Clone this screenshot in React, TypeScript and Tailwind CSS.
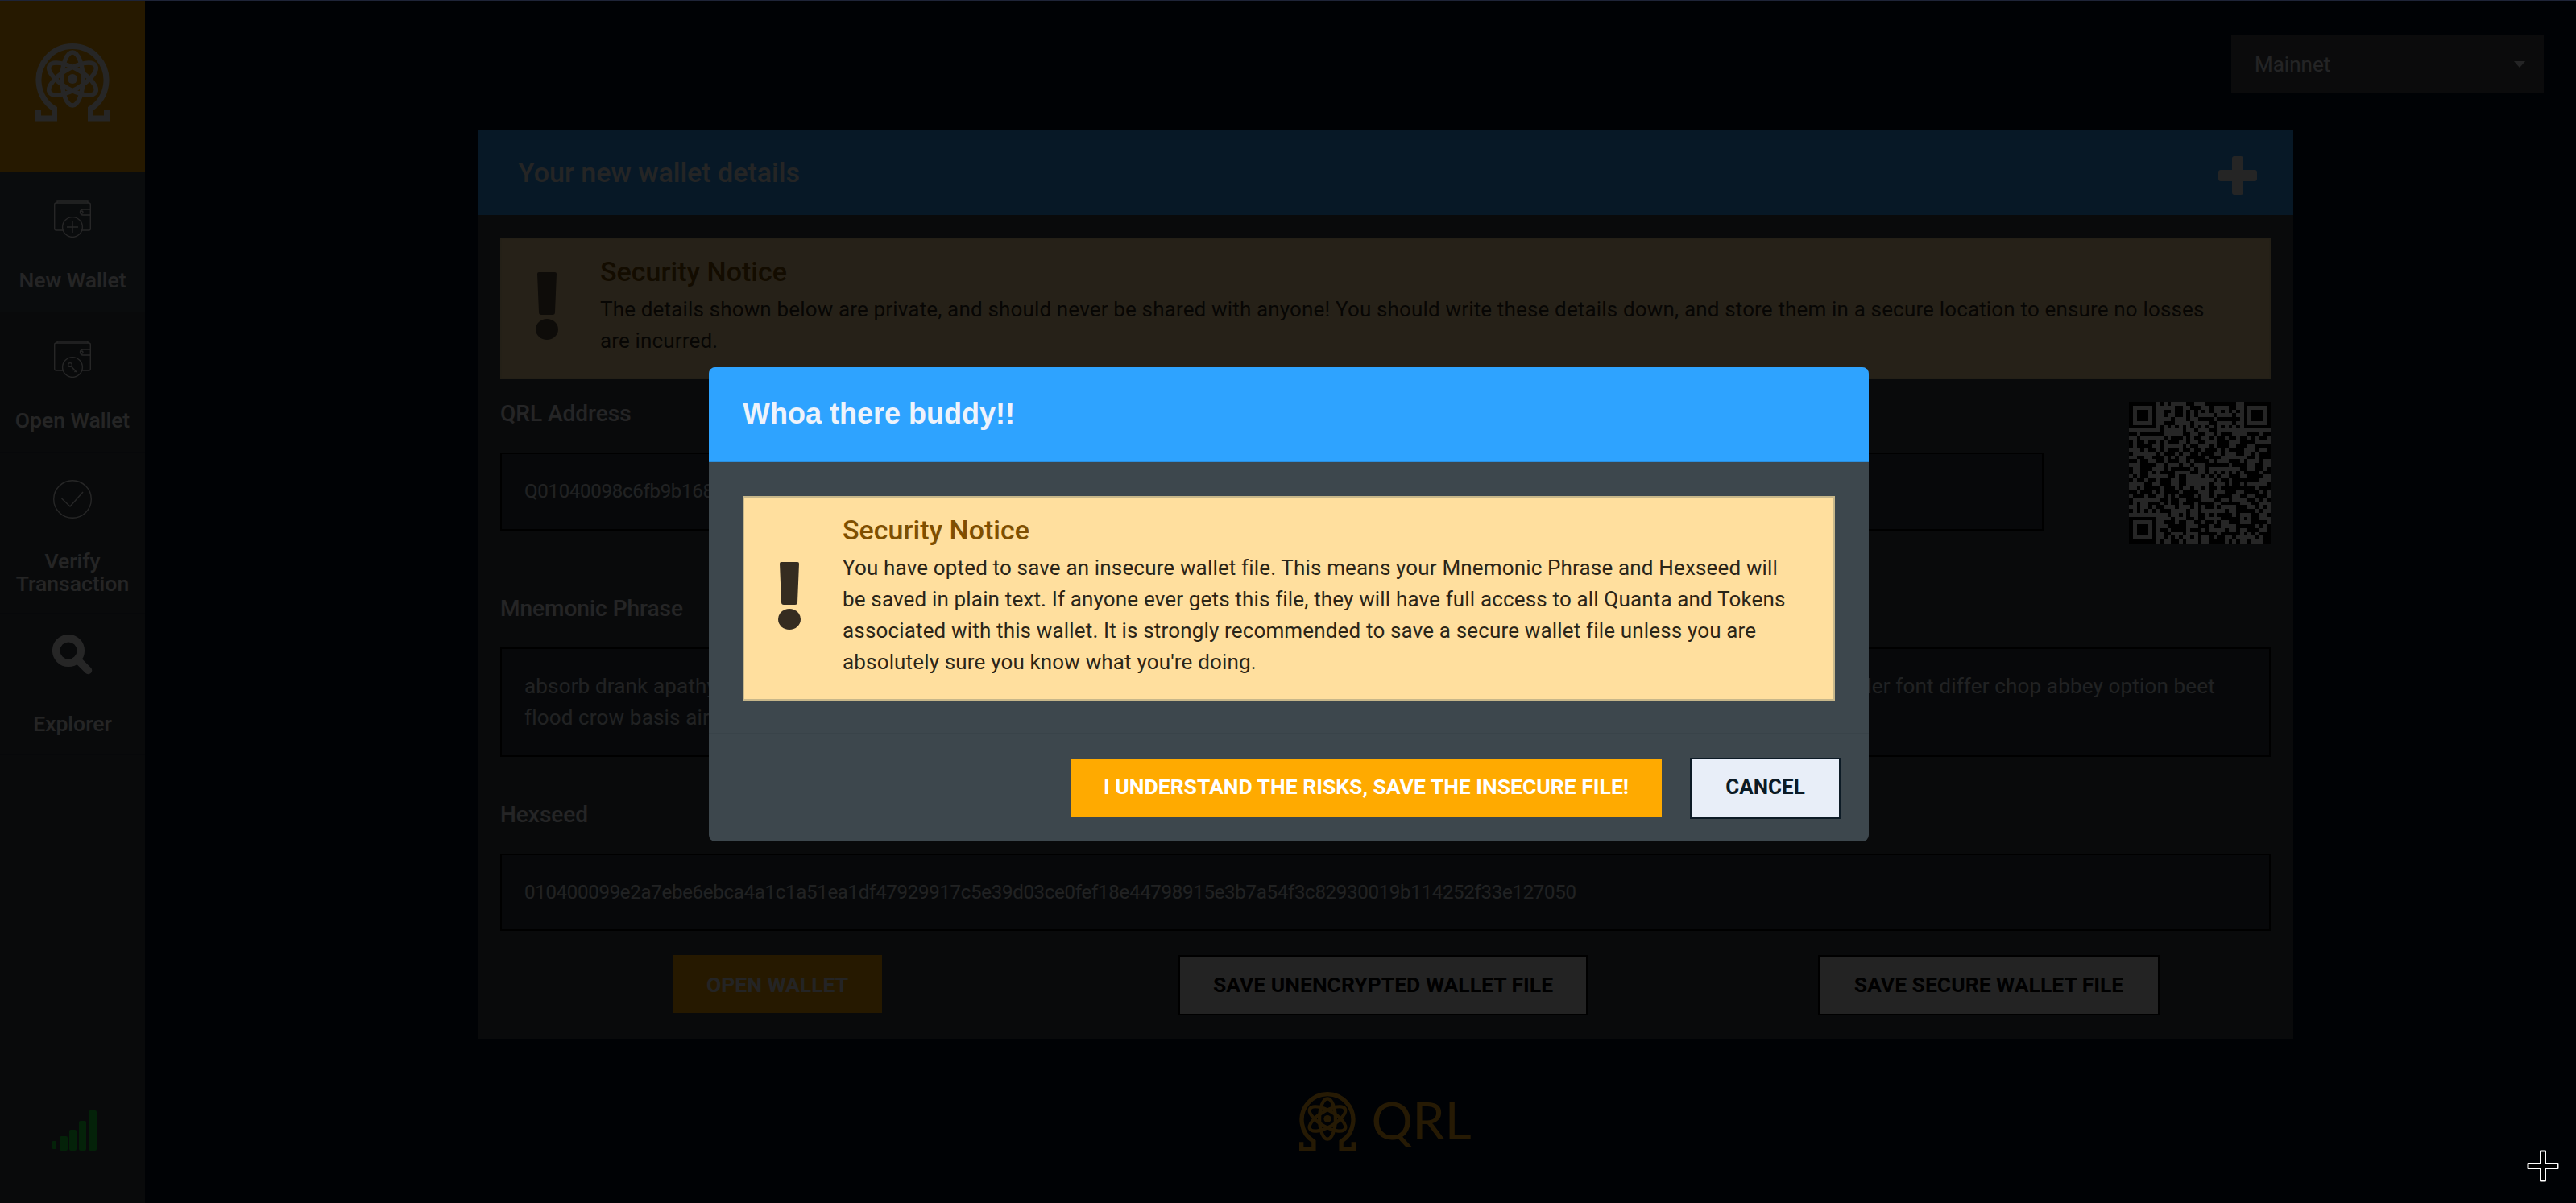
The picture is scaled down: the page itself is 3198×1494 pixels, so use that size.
import React from "react";

const qrSize = 37;

const inFinder = (x: number, y: number) => (x < 8 && y < 8) || (x > 28 && y < 8) || (x < 8 && y > 28);

// white modules of the QR, version 5 layout with a seeded fill
const qrModules = () => {
  const cells: [number, number][] = [];
  let seed = 48271;
  const next = () => {
    seed = (seed * 16807) % 2147483647;
    return seed / 2147483647;
  };
  for (let y = 0; y < qrSize; y++) {
    for (let x = 0; x < qrSize; x++) {
      const r = next();
      let white = r > 0.5;
      if (inFinder(x, y)) {
        const ox = x > 28 ? x - 30 : x;
        const oy = y > 28 ? y - 30 : y;
        const ring = ox === 7 || oy === 7 || ox === -1 || oy === -1;
        const outer = ox === 0 || ox === 6 || oy === 0 || oy === 6;
        const core = ox >= 2 && ox <= 4 && oy >= 2 && oy <= 4;
        white = ring || !(outer || core);
      } else if (x >= 28 && x <= 32 && y >= 28 && y <= 32) {
        const edge = x === 28 || x === 32 || y === 28 || y === 32;
        white = !(edge || (x === 30 && y === 30));
      } else if (x === 6) {
        white = y % 2 === 1;
      } else if (y === 6) {
        white = x % 2 === 1;
      }
      if (white) cells.push([x, y]);
    }
  }
  return cells;
};

const QrCode = () => (
  <svg width="176" height="176" viewBox="0 0 37 37" shapeRendering="crispEdges" className="shrink-0 bg-black">
    {qrModules().map(([x, y]) => (
      <rect key={`${x}-${y}`} x={x} y={y} width="1" height="1" fill="#ffffff" />
    ))}
  </svg>
);

const QrlLogo = ({ color, width, height }: { color: string; width: number; height: number }) => (
  <svg width={width} height={height} viewBox="0 0 92 98" fill="none" stroke={color} className="shrink-0">
    <path d="M3.5 83V94H23.5V82A42 42 0 1 1 68.5 82V94H88.5V83" strokeWidth="7" />
    <ellipse cx="46" cy="45" rx="33" ry="13" strokeWidth="5.5" transform="rotate(90 46 45)" />
    <ellipse cx="46" cy="45" rx="33" ry="13" strokeWidth="5.5" transform="rotate(30 46 45)" />
    <ellipse cx="46" cy="45" rx="33" ry="13" strokeWidth="5.5" transform="rotate(-30 46 45)" />
    <circle cx="46" cy="45" r="6" fill={color} stroke="none" />
  </svg>
);

const WalletBase = ({ fill, children }: { fill: string; children: React.ReactNode }) => (
  <svg width="46" height="46" viewBox="0 0 46 46" fill="none" stroke="#ffffff" strokeWidth="1.4" className="shrink-0">
    <path d="M4 3V1H42V3" />
    <rect x="0.7" y="3" width="44.6" height="34" rx="2" />
    <path d="M45.3 11H36a3.5 3.5 0 0 0 0 7H45.3" />
    <circle cx="34.5" cy="14.5" r="1.5" />
    <circle cx="23" cy="33" r="12.4" fill={fill} />
    {children}
  </svg>
);

const NewWalletIcon = () => (
  <WalletBase fill="#465059">
    <path d="M23 26V40M16 33H30" />
  </WalletBase>
);

const OpenWalletIcon = () => (
  <WalletBase fill="#3c444c">
    <circle cx="20" cy="30" r="2.4" />
    <path d="M21.5 32L28 39M25 35.5L23.5 37M27 37.5L25.5 39" />
  </WalletBase>
);

const VerifyIcon = () => (
  <svg width="48" height="48" viewBox="0 0 48 48" fill="none" stroke="#ffffff" strokeWidth="1.4" className="shrink-0">
    <circle cx="24" cy="24" r="23.3" />
    <path d="M10.5 23L21 33L37 15" />
  </svg>
);

const SearchIcon = () => (
  <svg width="50" height="50" viewBox="0 0 50 50" fill="none" stroke="#ffffff" strokeWidth="9.5" className="shrink-0">
    <circle cx="20" cy="20" r="15.3" />
    <path d="M31 31L44.5 44.5" strokeLinecap="round" />
  </svg>
);

const Bang = ({ color }: { color: string }) => (
  <svg width="28" height="84" viewBox="0 0 28 84" fill={color} className="shrink-0">
    <path d="M4 0H24a2 2 0 0 1 2 2L24 50a3 3 0 0 1-3 3H7a3 3 0 0 1-3-3L2 2a2 2 0 0 1 2-2Z" />
    <ellipse cx="14" cy="71" rx="14" ry="13" />
  </svg>
);

const Notice = ({
  bang,
  className,
  titleClass,
  children,
}: {
  bang: string;
  className: string;
  titleClass: string;
  children: React.ReactNode;
}) => (
  <div className={`flex items-center border-2 pl-[42px] pt-5 pb-[26px] ${className}`}>
    <Bang color={bang} />
    <div className="ml-[52px] min-w-0">
      <div className={`h-10 text-[34px] leading-10 font-medium ${titleClass}`}>Security Notice</div>
      <div className="mt-2 text-[26px] leading-[39px] tracking-[0.16px] whitespace-nowrap">{children}</div>
    </div>
  </div>
);

const NavItem = ({
  label,
  icon,
  className,
  labelClass,
}: {
  label: React.ReactNode;
  icon: React.ReactNode;
  className: string;
  labelClass: string;
}) => (
  <div className={`flex flex-col items-center border-b border-[#333a42] text-center ${className}`}>
    {icon}
    <div className={`text-[26.5px] leading-7 font-medium text-[#f4f6f8] ${labelClass}`}>{label}</div>
  </div>
);

const Field = ({ label, className, children }: { label: string; className: string; children: React.ReactNode }) => (
  <div>
    <div className="text-[28px] leading-7 font-medium text-[#f4f6fa]">{label}</div>
    <div className={`mt-[34px] border-2 border-black bg-[#333b42] pl-7 leading-[39px] text-[#dfe3e8] ${className}`}>
      {children}
    </div>
  </div>
);

const SignalBars = () => (
  <svg width="56" height="50" viewBox="0 0 56 50" fill="#1be040" className="shrink-0">
    <rect x="0" y="38" width="5" height="10" rx="1" />
    <rect x="9" y="32" width="10" height="18" rx="2" />
    <rect x="21" y="24" width="9" height="26" rx="2" />
    <rect x="33" y="13" width="9" height="37" rx="2" />
    <rect x="45" y="0" width="10" height="50" rx="2" />
  </svg>
);

const CursorCross = () => (
  <svg width="40" height="40" viewBox="0 0 40 40" className="absolute left-[3137px] top-[1428px]">
    <path
      d="M17 1.5H23V17H38.5V23H23V38.5H17V23H1.5V17H17Z"
      fill="#000000"
      stroke="#ffffff"
      strokeWidth="2"
      strokeLinejoin="round"
    />
  </svg>
);

const saveButton =
  "flex h-[75px] items-center justify-center border-2 border-black bg-[#e8e9ec] pb-0.5 text-[26.5px] font-bold text-black";

export default function App() {
  return (
    <div className="relative flex h-[1494px] w-[3198px] flex-col overflow-hidden bg-[#000e22] [font-family:Roboto,sans-serif]">
      <div className="relative z-20 h-px shrink-0 bg-[#1e2438]" />
      <div className="flex min-h-0 flex-1">
        <aside className="flex w-[180px] shrink-0 flex-col bg-[#3c444c]">
          <div className="flex h-[213px] items-start justify-center bg-[#ffaa00] pt-[52px]">
            <QrlLogo color="#ffffff" width={92} height={98} />
          </div>
          <NavItem
            label="New Wallet"
            icon={<NewWalletIcon />}
            className="h-[174px] bg-[#465059] pt-[35px]"
            labelClass="mt-[39px]"
          />
          <NavItem
            label="Open Wallet"
            icon={<OpenWalletIcon />}
            className="h-[174px] pt-[35px]"
            labelClass="mt-[39px]"
          />
          <NavItem
            label={
              <>
                Verify
                <br />
                Transaction
              </>
            }
            icon={<VerifyIcon />}
            className="h-[200px] pt-[34px]"
            labelClass="mt-[39px]"
          />
          <NavItem label="Explorer" icon={<SearchIcon />} className="h-[176px] pt-[26px]" labelClass="mt-[47px]" />
          <div className="mt-auto mb-[65px] flex pl-[65px]">
            <SignalBars />
          </div>
        </aside>

        <main className="flex min-w-0 flex-1 flex-col">
          <div className="flex justify-end pt-[42px] pr-10">
            <div className="flex h-[72px] w-[388px] items-center justify-between bg-[#4c4e54] pt-0.5 pr-[23px] pl-[29px] text-[26px] text-[#f0f2f4]">
              Mainnet
              <div className="h-0 w-0 border-x-[7px] border-t-[8px] border-x-transparent border-t-[#f0f2f4]" />
            </div>
          </div>

          <section className="mt-[46px] ml-[413px] w-[2254px] bg-[#3e474d]">
            <div className="flex h-[106px] items-center justify-between bg-[#2ea3ff] pr-[45px] pl-[50px]">
              <h2 className="text-[34px] font-medium text-[#f4f5f8]">Your new wallet details</h2>
              <svg width="48" height="48" viewBox="0 0 48 48" fill="#f4f5f8" className="mt-[7px]">
                <path d="M17 3a3 3 0 0 1 3-3h8a3 3 0 0 1 3 3V17H45a3 3 0 0 1 3 3v8a3 3 0 0 1-3 3H31V45a3 3 0 0 1-3 3H20a3 3 0 0 1-3-3V31H3a3 3 0 0 1-3-3V20a3 3 0 0 1 3-3H17Z" />
              </svg>
            </div>
            <div className="px-7 pt-7 pb-[29px]">
              <Notice
                bang="#5f5040"
                className="border-[#eed59a] bg-[#ffdf9e] text-[#332a1c]"
                titleClass="text-[#7f4f00]"
              >
                The details shown below are private, and should never be shared with anyone! You should write these details down, and store them in a secure location to ensure no losses
                <br />
                are incurred.
              </Notice>

              <div className="mt-7 flex items-start justify-between">
                <div className="w-[1916px] pt-px">
                  <Field
                    label="QRL Address"
                    className="flex h-[97px] items-center overflow-hidden text-[24px] tracking-[-0.28px]"
                  >
                    Q01040098c6fb9b168e2d47a09c1f53b6ad7e4120c98fb36d5ea17c04b2f96e83d1a07c52e4b9f3
                  </Field>
                </div>
                <QrCode />
              </div>

              <div className="mt-[67px]">
                <Field
                  label="Mnemonic Phrase"
                  className="h-[136px] pt-[27px] text-[26px] tracking-[0.16px] whitespace-nowrap"
                >
                  absorb drank apathy brief cotton lively mellow shrink pastry tunnel garden ripple marble fossil hollow canvas charcoal glimpse orbit sorry thunder font differ chop abbey option beet
                  <br />
                  flood crow basis air
                </Field>
              </div>

              <div className="mt-[58px]">
                <Field label="Hexseed" className="flex h-[96px] items-center text-[24px] tracking-[-0.28px]">
                  010400099e2a7ebe6ebca4a1c1a51ea1df47929917c5e39d03ce0fef18e44798915e3b7a54f3c82930019b114252f33e127050
                </Field>
              </div>

              <div className="mt-[30px] flex items-start pl-[214px]">
                <button className="flex h-[72px] w-[260px] items-start justify-center bg-[#ffaa00] pt-[17px] text-[26.5px] font-bold text-[#eef0f4]">
                  OPEN WALLET
                </button>
                <button className={`ml-[368px] w-[508px] ${saveButton}`}>SAVE UNENCRYPTED WALLET FILE</button>
                <button className={`ml-[286px] w-[424px] ${saveButton}`}>SAVE SECURE WALLET FILE</button>
              </div>
            </div>
          </section>

          <div className="mt-[65px] ml-[413px] flex w-[2254px] justify-center">
            <QrlLogo color="#ffb020" width={70} height={75} />
            <div className="mt-[4px] ml-[19px] text-[64px] leading-[64px] font-normal text-[#ffb020] [font-family:Lato,sans-serif]">
              QRL
            </div>
          </div>
        </main>
      </div>

      {/* backdrop and dialog */}
      <div className="absolute inset-x-0 top-px bottom-0 z-10 flex justify-center bg-black/85 pt-[455px] pl-[2px]">
        <div className="h-[589px] w-[1440px] overflow-hidden rounded-lg bg-[#3d474d]">
          <div className="flex h-[118px] items-center border-b-2 border-[#2b90e0] bg-[#2ea3ff] pl-[42px] text-[36px] font-bold text-[#eef3fb] [font-family:'Liberation_Sans',Arial,sans-serif]">
            Whoa there buddy!!
          </div>
          <div className="h-[338px] border-b-2 border-[#394349] px-[42px] pt-[42px]">
            <Notice bang="#352c20" className="border-[#c7b78a] bg-[#ffdf9e] text-[#2b2517]" titleClass="text-[#7f4f00]">
              You have opted to save an insecure wallet file. This means your Mnemonic Phrase and Hexseed will
              <br />
              be saved in plain text. If anyone ever gets this file, they will have full access to all Quanta and Tokens
              <br />
              associated with this wallet. It is strongly recommended to save a secure wallet file unless you are
              <br />
              absolutely sure you know what you're doing.
            </Notice>
          </div>
          <div className="flex items-center justify-end gap-[35px] pt-[29px] pr-[35px]">
            <button className="flex h-[72px] w-[734px] items-center justify-center bg-[#ffaa00] pb-1 text-[26.5px] font-bold text-white">
              I UNDERSTAND THE RISKS, SAVE THE INSECURE FILE!
            </button>
            <button className="flex h-[76px] w-[187px] items-center justify-center border-2 border-[#0d1b26] bg-[#e8eef8] pb-1 text-[26px] font-bold text-[#0c1a25]">
              CANCEL
            </button>
          </div>
        </div>
      </div>

      <div className="absolute inset-0 z-20">
        <CursorCross />
      </div>
    </div>
  );
}
